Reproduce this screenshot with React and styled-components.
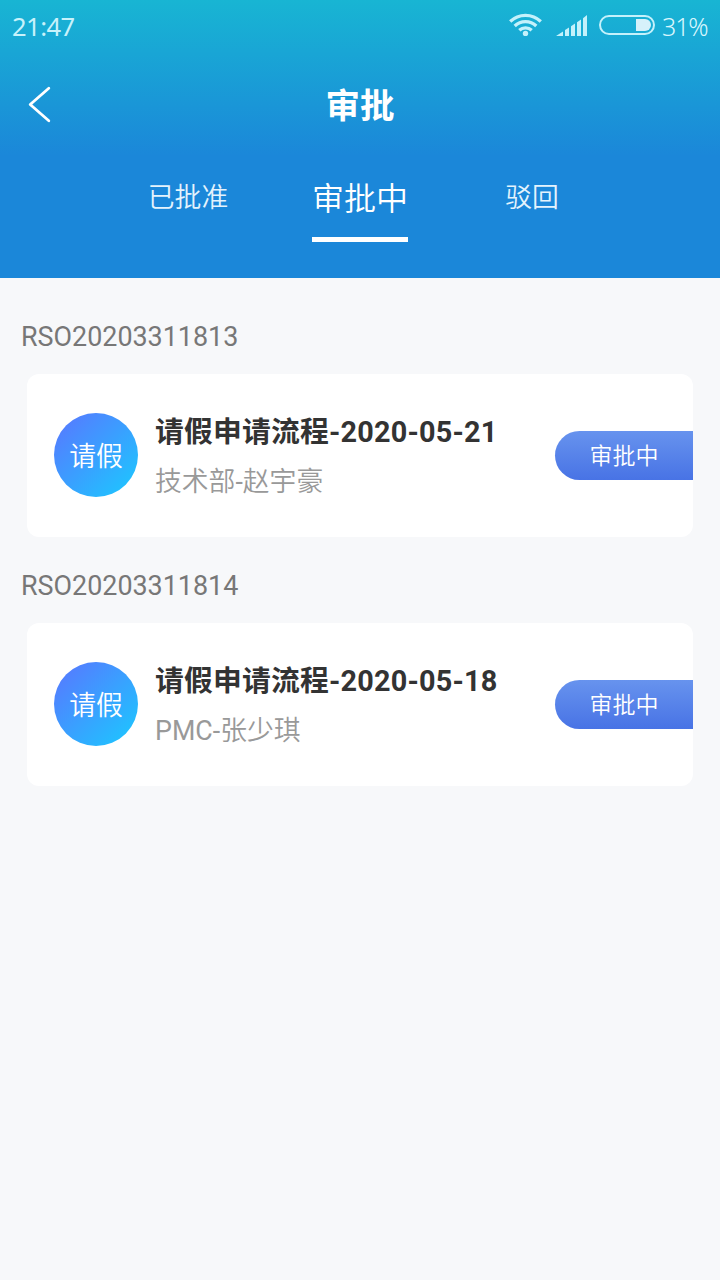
import React from 'react';
import styled, { createGlobalStyle } from 'styled-components';

const GlobalStyle = createGlobalStyle`
  * {
    box-sizing: border-box;
  }

  body {
    margin: 0;
    background-color: #f7f8fa;
    font-family: Roboto, "Noto Sans CJK SC", sans-serif;
  }
`

const Page = styled.div`
  width: 720px;
  min-height: 1280px;
  background-color: #f7f8fa;
`

const Header = styled.header`
  height: 278px;
  background: linear-gradient(to bottom, #18b5d3 0, #1b87d9 156px);
  color: #fff;
`

const StatusBar = styled.div`
  display: flex;
  align-items: center;
  height: 50px;
  padding: 1px 12px 0;
  color: #c8f2fb;
  font-family: "Noto Sans", sans-serif;
  line-height: 50px;
`

const Clock = styled.span`
  flex: 1;
  font-size: 25.5px;
  letter-spacing: -0.5px;
`

const Battery = styled.span`
  width: 46px;
  color: #d8f6fd;
  font-size: 25px;
  font-weight: 300;
  letter-spacing: -1.1px;
`

const StatusIcons = styled.svg`
  width: 148px;
  height: 26px;
  margin: 0 6px 1px 0;
`

const NavBar = styled.div`
  display: grid;
  grid-template-columns: 80px 1fr 80px;
  align-items: center;
  height: 108px;
`

const BackButton = styled.button`
  display: flex;
  padding: 0 0 0 27px;
  border: 0;
  background: none;
  color: #fff;
`

const NavTitle = styled.h1`
  margin: 0;
  padding-top: 3px;
  font-size: 34.5px;
  font-weight: 700;
  line-height: 50px;
  text-align: center;
`

const Tabs = styled.nav`
  display: flex;
  justify-content: center;
  height: 84px;
`

const Tab = styled.a`
  display: flex;
  justify-content: center;
  width: 172px;
  color: ${({ $active }) => ($active ? '#fff' : '#e4f3fd')};
  font-size: ${({ $active }) => ($active ? '32px' : '26.8px')};
  font-weight: 350;
  line-height: ${({ $active }) => ($active ? '82px' : '80px')};
`

const TabLabel = styled.span`
  height: 84px;
  border-bottom: ${({ $active }) => ($active ? '5px solid #fff' : '0')};
`

const List = styled.main`
  padding: 33px 27px 0;
`

const Item = styled.section`
  margin-bottom: 23px;
`

const ItemCode = styled.div`
  height: 63px;
  margin-left: -6px;
  color: #777;
  font-size: 26.9px;
  line-height: 52px;
`

const Card = styled.div`
  display: flex;
  align-items: center;
  height: 163px;
  padding-left: 27px;
  border-radius: 12px;
  background-color: #fff;
`

const Avatar = styled.div`
  width: 84px;
  height: 84px;
  margin-bottom: 2px;
  border-radius: 50%;
  background: linear-gradient(135deg, #547dff 10%, #20c2ff 90%);
  color: #fff;
  font-size: 26.8px;
  font-weight: 350;
  line-height: 88px;
  text-align: center;
`

const CardText = styled.div`
  flex: 1;
  padding: 3px 0 0 17px;
  white-space: nowrap;
`

const CardTitle = styled.div`
  color: #333;
  font-size: 28.8px;
  font-weight: 700;
  letter-spacing: 0.2px;
  line-height: 50px;
`

const CardOwner = styled.div`
  color: #999;
  font-family: Roboto, "Noto Sans CJK SC DemiLight", "Noto Sans CJK SC", sans-serif;
  font-size: 26.8px;
  font-weight: 400;
  line-height: 50px;
`

const StateTag = styled.div`
  width: 138px;
  height: 49px;
  border-radius: 25px 0 0 25px;
  background: linear-gradient(to bottom, #6793ee, #4873e5);
  color: #fff;
  font-size: 23px;
  font-weight: 350;
  line-height: 51px;
  text-align: center;
`

const tabs = ['已批准', '审批中', '驳回']

const items = [
  { code: 'RSO20203311813', type: '请假', title: '请假申请流程-2020-05-21', owner: '技术部-赵宇豪', state: '审批中' },
  { code: 'RSO20203311814', type: '请假', title: '请假申请流程-2020-05-18', owner: 'PMC-张少琪', state: '审批中' },
]

function SystemIcons() {
  return (
    <StatusIcons viewBox="508 12 148 26" fill="none" stroke="#c4f1fb">
      <g strokeWidth="3.3">
        <path d="M510.2 21.5a22 22 0 0 1 30.6 0" />
        <path d="M514.7 26a15.5 15.5 0 0 1 21.6 0" />
        <path d="M519.3 30.3a9 9 0 0 1 12.4 0" />
      </g>
      <circle cx="525.5" cy="33.4" r="2.7" fill="#c4f1fb" stroke="none" />
      <path
        fill="#c4f1fb"
        stroke="none"
        d="M556 36l7-4.6V36zM565 36v-6l4-2.6V36zM571 36v-9.8l4-2.6V36zM577 36V22.2l4-2.6V36zM583 36V18.2l4-3.2v21z"
      />
      <rect x="600" y="16" width="54" height="18" rx="9" strokeWidth="2" />
      <path fill="#d6f1fa" stroke="none" d="M636 19h9a6 6 0 0 1 0 12h-9z" />
    </StatusIcons>
  )
}

export default function App() {
  return (
    <Page>
      <GlobalStyle />
      <Header>
        <StatusBar>
          <Clock>21:47</Clock>
          <SystemIcons />
          <Battery>31%</Battery>
        </StatusBar>
        <NavBar>
          <BackButton aria-label="返回">
            <svg width="24" height="38" viewBox="0 0 24 38" fill="none" stroke="currentColor" strokeWidth="2.8" strokeLinecap="round" strokeLinejoin="round">
              <path d="M21.8 3.2L3.2 19.5l18.6 16.3" />
            </svg>
          </BackButton>
          <NavTitle>审批</NavTitle>
        </NavBar>
        <Tabs>
          {tabs.map((name) => (
            <Tab key={name} $active={name === '审批中'}>
              <TabLabel $active={name === '审批中'}>{name}</TabLabel>
            </Tab>
          ))}
        </Tabs>
      </Header>
      <List>
        {items.map((item) => (
          <Item key={item.code}>
            <ItemCode>{item.code}</ItemCode>
            <Card>
              <Avatar>{item.type}</Avatar>
              <CardText>
                <CardTitle>{item.title}</CardTitle>
                <CardOwner>{item.owner}</CardOwner>
              </CardText>
              <StateTag>{item.state}</StateTag>
            </Card>
          </Item>
        ))}
      </List>
    </Page>
  )
}
